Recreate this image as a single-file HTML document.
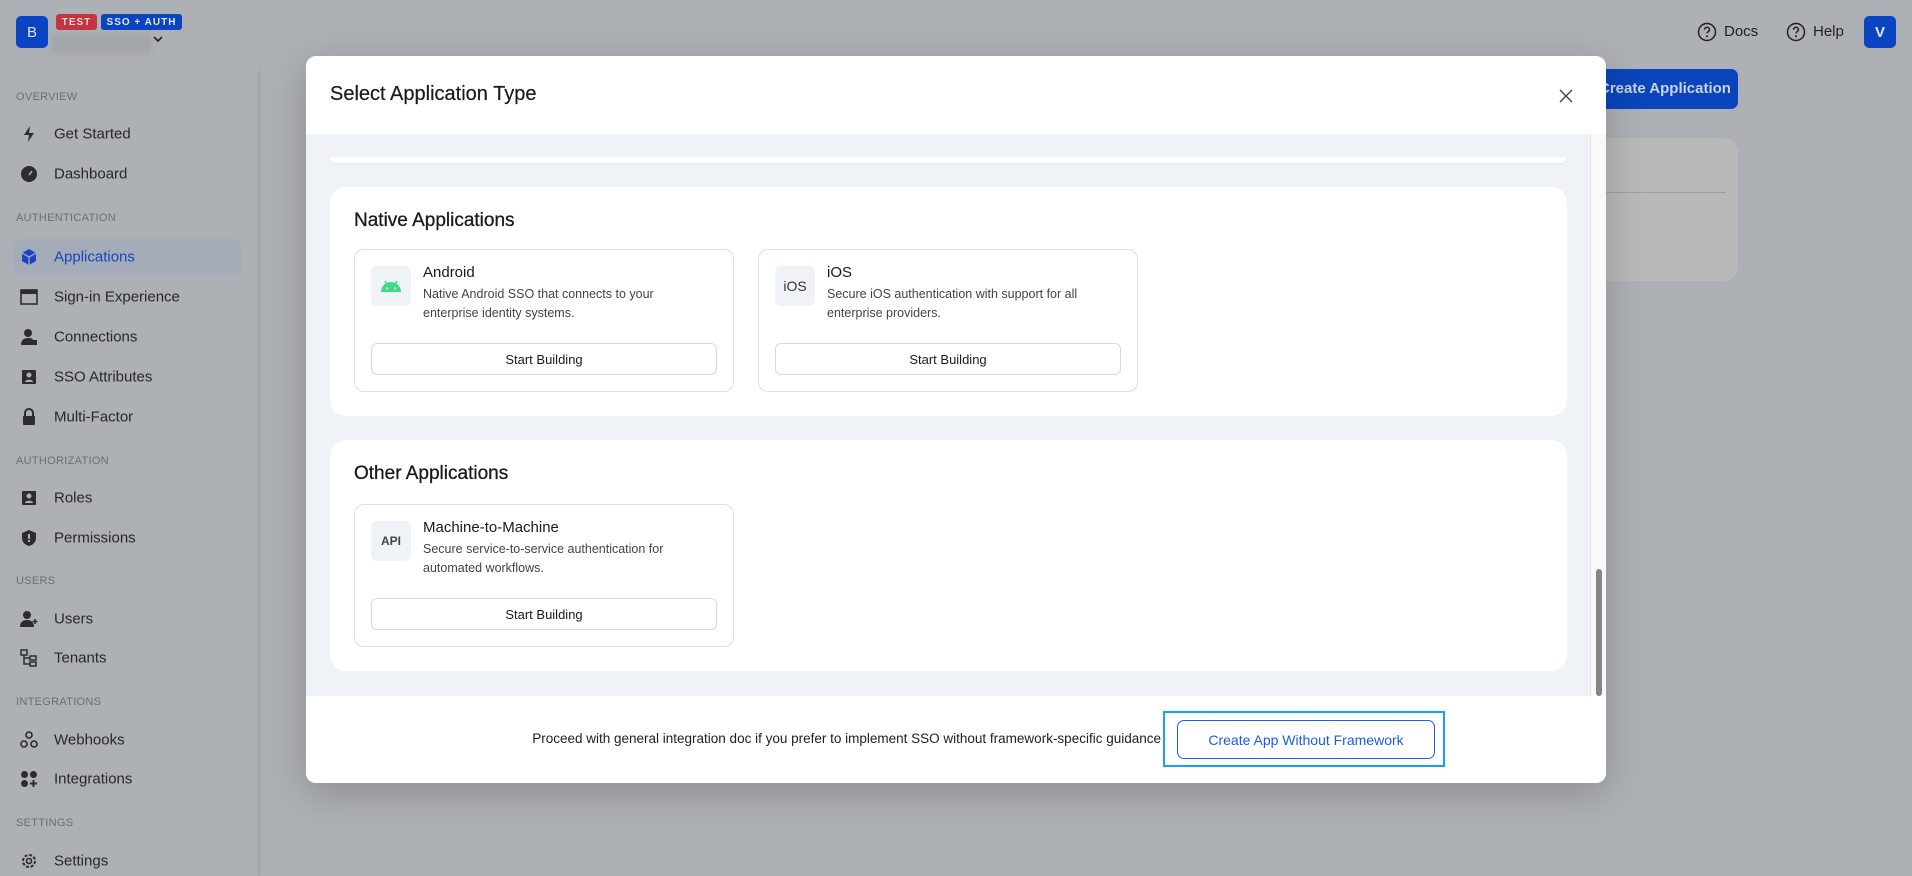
<!DOCTYPE html>
<html><head><meta charset="utf-8"><style>
*{box-sizing:border-box;margin:0;padding:0}
body{width:1912px;height:876px;overflow:hidden;background:#adb0b4;font-family:"Liberation Sans",Arial,sans-serif;position:relative;color:#222}
.abs{position:absolute}
.sec{position:absolute;left:16px;font-size:11px;color:#6b6f75;letter-spacing:.3px}
.it{position:absolute;left:54px;font-size:15px;color:#26282c;transform:translateY(-50%)}
.ic{position:absolute;left:20px;width:18px;height:18px;transform:translateY(-50%)}
.modal{position:absolute;left:306px;top:56px;width:1300px;height:727px;background:#fff;border-radius:10px;overflow:hidden;box-shadow:0 10px 40px rgba(0,0,0,.2)}
.card{position:absolute;background:#fff;border-radius:16px}
.sub{position:absolute;border:1px solid #dcdfe4;border-radius:10px;background:#fff}
.ibox{position:absolute;left:16px;top:16px;width:40px;height:40px;border-radius:6px;background:#eff2f7;display:flex;align-items:center;justify-content:center;font-size:14px;color:#333}
.st{position:absolute;left:68px;top:14px;font-size:15px;color:#1a1a1a}
.sd{position:absolute;left:68px;top:35px;font-size:12.5px;line-height:19px;color:#444;width:270px}
.btn{position:absolute;left:16px;right:16px;bottom:16px;height:32px;border:1px solid #d6d9de;border-radius:6px;font-size:13px;display:flex;align-items:center;justify-content:center;color:#1a1a1a}
.h{position:absolute;left:24px;font-size:19px;color:#1a1a1a;-webkit-text-stroke:.3px #1a1a1a}
</style></head><body>
<div class="abs" style="left:16px;top:16px;width:32px;height:32px;border-radius:5px;background:#0b44c0;color:#dfe6f5;font-size:15px;display:flex;align-items:center;justify-content:center">B</div>
<div class="abs" style="left:56px;top:14px;width:41px;height:16px;border-radius:3px;background:#c3343e;color:#f3d6d8;font-size:10px;font-weight:bold;letter-spacing:1px;display:flex;align-items:center;justify-content:center">TEST</div>
<div class="abs" style="left:101px;top:14px;width:81px;height:16px;border-radius:3px;background:#0b44c0;color:#dfe6f5;font-size:10px;font-weight:bold;letter-spacing:1px;display:flex;align-items:center;justify-content:center">SSO + AUTH</div>
<div class="abs" style="left:52px;top:34px;width:99px;height:20px;background:#a3a6aa;border-radius:3px;filter:blur(2px)"></div>
<svg class="abs" style="left:152px;top:34px" width="12" height="10" viewBox="0 0 12 10"><path d="M2 3l4 4 4-4" stroke="#222" stroke-width="1.6" fill="none"/></svg>
<div class="abs" style="left:257px;top:70px;width:4px;height:806px;background:#a5a8ac;border-radius:2px"></div>
<div class="sec" style="top:91px">OVERVIEW</div>
<svg class="ic" style="top:134px" viewBox="0 0 18 18"><path d="M10 1L4 10h5l-1 7 6-9H9z" fill="#2b2d31"/></svg><div class="it" style="top:134px">Get Started</div>
<svg class="ic" style="top:174px" viewBox="0 0 18 18"><circle cx="9" cy="9" r="8" fill="#2b2d31"/><path d="M9 10l3-4" stroke="#adb0b4" stroke-width="1.5"/></svg><div class="it" style="top:174px">Dashboard</div>
<div class="sec" style="top:212px">AUTHENTICATION</div>
<div class="abs" style="left:13px;top:239px;width:228px;height:36px;border-radius:7px;background:#a3acb8"></div>
<svg class="ic" style="top:257px" viewBox="0 0 18 18"><path d="M9 1l7 4v8l-7 4-7-4V5z" fill="#1844c2"/><path d="M2 5l7 4 7-4M9 9v8" stroke="#a3acb8" stroke-width="1.3" fill="none"/></svg><div class="it" style="top:257px;color:#1844c2">Applications</div>
<svg class="ic" style="top:297px" viewBox="0 0 18 18"><rect x="1" y="2" width="16" height="14" fill="none" stroke="#2b2d31" stroke-width="1.6"/><rect x="1" y="2" width="16" height="4" fill="#2b2d31"/></svg><div class="it" style="top:297px">Sign-in Experience</div>
<svg class="ic" style="top:337px" viewBox="0 0 18 18"><circle cx="8" cy="5" r="4" fill="#2b2d31"/><path d="M1 17c0-5 3-7 7-7s5 1 5 2v5z" fill="#2b2d31"/><rect x="12" y="12" width="5" height="5" fill="#2b2d31"/></svg><div class="it" style="top:337px">Connections</div>
<svg class="ic" style="top:377px" viewBox="0 0 18 18"><rect x="2" y="2" width="14" height="14" rx="1" fill="#2b2d31"/><circle cx="9" cy="7" r="2.5" fill="#adb0b4"/><path d="M5 14c0-3 8-3 8 0z" fill="#adb0b4"/></svg><div class="it" style="top:377px">SSO Attributes</div>
<svg class="ic" style="top:417px" viewBox="0 0 18 18"><path d="M5 8V5a4 4 0 018 0v3" stroke="#2b2d31" stroke-width="2" fill="none"/><rect x="3" y="8" width="12" height="9" rx="1" fill="#2b2d31"/></svg><div class="it" style="top:417px">Multi-Factor</div>
<div class="sec" style="top:455px">AUTHORIZATION</div>
<svg class="ic" style="top:498px" viewBox="0 0 18 18"><rect x="2" y="2" width="14" height="14" rx="1" fill="#2b2d31"/><circle cx="9" cy="7" r="2.5" fill="#adb0b4"/><path d="M5 14c0-3 8-3 8 0z" fill="#adb0b4"/></svg><div class="it" style="top:498px">Roles</div>
<svg class="ic" style="top:538px" viewBox="0 0 18 18"><path d="M9 1l7 3v5c0 4-3 7-7 8-4-1-7-4-7-8V4z" fill="#2b2d31"/><rect x="8" y="5" width="2" height="5" fill="#adb0b4"/><rect x="8" y="11" width="2" height="2" fill="#adb0b4"/></svg><div class="it" style="top:538px">Permissions</div>
<div class="sec" style="top:575px">USERS</div>
<svg class="ic" style="top:619px" viewBox="0 0 18 18"><circle cx="7" cy="5" r="4" fill="#2b2d31"/><path d="M0 17c0-5 3-7 7-7s7 2 7 7z" fill="#2b2d31"/><path d="M15 9v5M12.5 11.5h5" stroke="#2b2d31" stroke-width="1.6"/></svg><div class="it" style="top:619px">Users</div>
<svg class="ic" style="top:658px" viewBox="0 0 18 18"><rect x="1" y="1" width="6" height="5" fill="none" stroke="#2b2d31" stroke-width="1.5"/><rect x="10" y="7" width="6" height="4" fill="none" stroke="#2b2d31" stroke-width="1.5"/><rect x="10" y="13" width="6" height="4" fill="none" stroke="#2b2d31" stroke-width="1.5"/><path d="M4 6v9h6M4 9h6" stroke="#2b2d31" stroke-width="1.5" fill="none"/></svg><div class="it" style="top:658px">Tenants</div>
<div class="sec" style="top:696px">INTEGRATIONS</div>
<svg class="ic" style="top:740px" viewBox="0 0 18 18"><circle cx="9" cy="4" r="3" fill="none" stroke="#2b2d31" stroke-width="1.6"/><circle cx="4" cy="13" r="3" fill="none" stroke="#2b2d31" stroke-width="1.6"/><circle cx="14" cy="13" r="3" fill="none" stroke="#2b2d31" stroke-width="1.6"/></svg><div class="it" style="top:740px">Webhooks</div>
<svg class="ic" style="top:779px" viewBox="0 0 18 18"><circle cx="4.5" cy="4.5" r="3.5" fill="#2b2d31"/><circle cx="13.5" cy="4.5" r="3.5" fill="#2b2d31"/><circle cx="4.5" cy="13.5" r="3.5" fill="#2b2d31"/><path d="M13.5 10v7M10 13.5h7" stroke="#2b2d31" stroke-width="2"/></svg><div class="it" style="top:779px">Integrations</div>
<div class="sec" style="top:817px">SETTINGS</div>
<svg class="ic" style="top:861px" viewBox="0 0 18 18"><circle cx="9" cy="9" r="6" fill="none" stroke="#2b2d31" stroke-width="2" stroke-dasharray="3 1.7"/><circle cx="9" cy="9" r="2.5" fill="none" stroke="#2b2d31" stroke-width="1.6"/></svg><div class="it" style="top:861px">Settings</div>
<svg class="abs" style="left:1697px;top:22px" width="20" height="20" viewBox="0 0 20 20"><circle cx="10" cy="10" r="8.5" fill="none" stroke="#1f2023" stroke-width="1.5"/><path d="M7.5 7.8a2.5 2.5 0 115 0c0 1.7-2.5 1.8-2.5 3.6" fill="none" stroke="#1f2023" stroke-width="1.5"/><circle cx="10" cy="14.3" r="1" fill="#1f2023"/></svg>
<div class="abs" style="left:1724px;top:23px;font-size:15px;color:#1f2023">Docs</div>
<svg class="abs" style="left:1786px;top:22px" width="20" height="20" viewBox="0 0 20 20"><circle cx="10" cy="10" r="8.5" fill="none" stroke="#1f2023" stroke-width="1.5"/><path d="M7.5 7.8a2.5 2.5 0 115 0c0 1.7-2.5 1.8-2.5 3.6" fill="none" stroke="#1f2023" stroke-width="1.5"/><circle cx="10" cy="14.3" r="1" fill="#1f2023"/></svg>
<div class="abs" style="left:1813px;top:23px;font-size:15px;color:#1f2023">Help</div>
<div class="abs" style="left:1864px;top:16px;width:32px;height:32px;border-radius:5px;background:#0b44c0;color:#dfe6f5;font-size:15px;font-weight:bold;display:flex;align-items:center;justify-content:center">V</div>
<div class="abs" style="left:1560px;top:69px;width:178px;height:40px;border-radius:7px;background:#0a45bd;color:#c9d3ea;font-size:15px;font-weight:bold;padding-left:39px;line-height:40px">Create Application</div>
<div class="abs" style="left:1560px;top:138px;width:178px;height:143px;border-radius:14px;background:#b9b9ba"></div>
<div class="abs" style="left:1606px;top:192px;width:120px;height:1px;background:#a0a0a0"></div>
<div class="modal">
 <div class="abs" style="left:24px;top:27px;font-size:20px;color:#1a1a1a;-webkit-text-stroke:.2px #1a1a1a">Select Application Type</div>
 <svg class="abs" style="left:1252px;top:32px" width="16" height="16" viewBox="0 0 16 16"><path d="M2 2l12 12M14 2L2 14" stroke="#444" stroke-width="1.4"/></svg>
 <div class="abs" style="left:0;top:78px;width:1300px;height:562px;background:#eff2f7;overflow:hidden">
  <div class="abs" style="left:24px;top:23px;width:1237px;height:6px;background:#fff;border-radius:0 0 10px 10px;box-shadow:0 1px 2px rgba(0,0,0,.05)"></div>
  <div class="card" style="left:24px;top:53px;width:1237px;height:229px">
   <div class="h" style="top:23px">Native Applications</div>
   <div class="sub" style="left:24px;top:62px;width:380px;height:143px">
    <div class="ibox"><svg width="22" height="14" viewBox="0 0 22 14"><path d="M1 13a10 10 0 0120 0z" fill="#3ddc84"/><path d="M5 2l2 4M17 2l-2 4" stroke="#3ddc84" stroke-width="1.4"/><circle cx="7" cy="9.5" r="1.1" fill="#eff2f7"/><circle cx="15" cy="9.5" r="1.1" fill="#eff2f7"/></svg></div>
    <div class="st">Android</div><div class="sd">Native Android SSO that connects to your enterprise identity systems.</div>
    <div class="btn">Start Building</div>
   </div>
   <div class="sub" style="left:428px;top:62px;width:380px;height:143px">
    <div class="ibox">iOS</div>
    <div class="st">iOS</div><div class="sd">Secure iOS authentication with support for all enterprise providers.</div>
    <div class="btn">Start Building</div>
   </div>
  </div>
  <div class="card" style="left:24px;top:306px;width:1237px;height:231px">
   <div class="h" style="top:23px">Other Applications</div>
   <div class="sub" style="left:24px;top:64px;width:380px;height:143px">
    <div class="ibox" style="font-size:12px;font-weight:bold;color:#444">API</div>
    <div class="st">Machine-to-Machine</div><div class="sd">Secure service-to-service authentication for automated workflows.</div>
    <div class="btn">Start Building</div>
   </div>
  </div>
  <div class="abs" style="left:1284px;top:0;width:16px;height:562px;background:#f9f9f9;border-left:1px solid #e6e6e6"></div>
  <div class="abs" style="left:1290px;top:435px;width:6px;height:127px;background:#858585;border-radius:3px"></div>
 </div>
 <div class="abs" style="left:0;top:640px;width:1300px;height:87px;background:#fff">
  <div class="abs" style="right:445px;top:35px;font-size:13.5px;color:#222">Proceed with general integration doc if you prefer to implement SSO without framework-specific guidance</div>
  <div class="abs" style="left:857px;top:15px;width:282px;height:56px;border:2px solid #14a3f0"></div>
  <div class="abs" style="left:871px;top:24px;width:258px;height:39px;border:1px solid #1d5ff0;border-radius:7px;color:#1a5ce8;font-size:14px;display:flex;align-items:center;justify-content:center">Create App Without Framework</div>
 </div>
</div>
</body></html>
